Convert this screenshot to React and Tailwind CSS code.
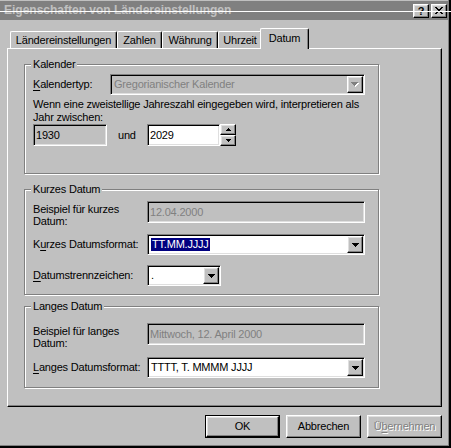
import React from "react";

const RAISED =
  "border border-t-white border-l-white border-r-black border-b-black shadow-[inset_-1px_-1px_#808080,inset_1px_1px_#dfdfdf]";
const SUNKEN =
  "border border-t-[#808080] border-l-[#808080] border-r-white border-b-white shadow-[inset_1px_1px_#000,inset_-1px_-1px_#dfdfdf]";
const ETCHED = "border border-[#808080] shadow-[inset_1px_1px_#fff,1px_1px_#fff]";

const Mn = ({ children }) => <span className="underline underline-offset-[2px]">{children}</span>;

const DownArrow = ({ disabled }) =>
  disabled ? (
    <svg width="8" height="5" viewBox="0 0 8 5">
      <path d="M1 1h7v1H1zM2 2h5v1H2zM3 3h3v1H3zM4 4h1v1H4z" fill="#fff" />
      <path d="M0 0h7v1H0zM1 1h5v1H1zM2 2h3v1H2zM3 3h1v1H3z" fill="#808080" />
    </svg>
  ) : (
    <svg width="7" height="4" viewBox="0 0 7 4">
      <path d="M0 0h7v1H0zM1 1h5v1H1zM2 2h3v1H2zM3 3h1v1H3z" fill="#000" />
    </svg>
  );

const SmallArrow = ({ up }) => (
  <svg width="5" height="3" viewBox="0 0 5 3">
    <path
      d={up ? "M2 0h1v1H2zM1 1h3v1H1zM0 2h5v1H0z" : "M0 0h5v1H0zM1 1h3v1H1zM2 2h1v1H2z"}
      fill="#000"
    />
  </svg>
);

const ArrowButton = ({ disabled }) => (
  <div className={`w-[16px] h-[17px] shrink-0 bg-[#c0c0c0] flex items-center justify-center ${RAISED}`}>
    <DownArrow disabled={disabled} />
  </div>
);

const Combo = ({ className, text, disabled, selected }) => (
  <div
    className={`h-[21px] flex items-center p-px ${SUNKEN} ${disabled ? "bg-[#c0c0c0]" : "bg-white"} ${className}`}
  >
    <div className={`flex-1 pl-[2px] whitespace-nowrap overflow-hidden ${disabled ? "text-[#808080]" : ""}`}>
      {selected ? <span className="bg-[#000080] text-white px-px py-px">{text}</span> : text}
    </div>
    <ArrowButton disabled={disabled} />
  </div>
);

const Edit = ({ className, text, gray, white }) => (
  <div
    className={`h-[22px] flex items-center pl-[2px] whitespace-nowrap ${SUNKEN} ${white ? "bg-white" : "bg-[#c0c0c0]"} ${
      gray ? "text-[#808080]" : ""
    } ${className}`}
  >
    {text}
  </div>
);

const Group = ({ title, className, children }) => (
  <div className={`relative w-[355px] shrink-0 ${ETCHED} ${className}`}>
    <span className="absolute -top-[7px] left-[6px] px-[2px] bg-[#c0c0c0] leading-[13px]">{title}</span>
    {children}
  </div>
);

const Tab = ({ w, children }) => (
  <div
    className={`${w} h-[17px] shrink-0 rounded-t-[2px] border-t border-l border-white border-r border-r-black shadow-[inset_-1px_0_#808080] flex items-center justify-center whitespace-nowrap`}
  >
    {children}
  </div>
);

const Button = ({ children, def, disabled }) => (
  <div className={`w-[75px] h-[23px] ${def ? "border border-black" : ""}`}>
    <div
      className={`w-full h-full bg-[#c0c0c0] flex items-center justify-center ${RAISED} ${
        disabled ? "text-[#808080] [text-shadow:1px_1px_#fff]" : ""
      }`}
    >
      {children}
    </div>
  </div>
);

const CaptionBtn = ({ children, className = "" }) => (
  <div className={`w-[16px] h-[14px] bg-[#c0c0c0] flex items-center justify-center ${RAISED} ${className}`}>
    {children}
  </div>
);

export default function App() {
  return (
    <div className="relative w-[451px] h-[448px] bg-[#c0c0c0] font-['Liberation_Sans',Arial,sans-serif] text-[11px] leading-[13px] tracking-[-0.2px] text-black overflow-hidden">
      <div className="flex flex-col w-full h-full border-r-2 border-b-2 border-black shadow-[inset_-1px_-1px_#808080]">
        {/* Title bar (inactive) */}
        <div className="mt-px h-[19px] bg-[#808080] flex items-center pl-[4px] pr-[2px]">
          <span className="flex-1 font-bold text-[12px] tracking-normal text-[#c0c0c0] whitespace-nowrap">
            Eigenschaften von Ländereinstellungen
          </span>
          <CaptionBtn>
            <span className="font-bold text-[11px] leading-none pt-px">?</span>
          </CaptionBtn>
          <CaptionBtn className="ml-[2px]">
            <svg width="8" height="7" viewBox="0 0 8 7">
              <path
                d="M0 0h2v1H0zM6 0h2v1H6zM1 1h2v1H1zM5 1h2v1H5zM2 2h4v1H2zM3 3h2v1H3zM2 4h4v1H2zM1 5h2v1H1zM5 5h2v1H5zM0 6h2v1H0zM6 6h2v1H6z"
                fill="#000"
              />
            </svg>
          </CaptionBtn>
        </div>

        {/* Tabs */}
        <div className="mt-[8px] h-[20px] flex items-end pl-[10px]">
          <Tab w="w-[107px]">Ländereinstellungen</Tab>
          <Tab w="w-[45px]">Zahlen</Tab>
          <Tab w="w-[56px]">Währung</Tab>
          <Tab w="w-[44px]">Uhrzeit</Tab>
          <div className="relative z-10 -ml-[2px] -mb-px w-[49px] h-[21px] shrink-0 bg-[#c0c0c0] rounded-t-[2px] border-t border-l border-white border-r border-r-black shadow-[inset_-1px_0_#808080] flex items-center justify-center pb-[2px]">
            Datum
          </div>
        </div>

        {/* Tab panel */}
        <div className="ml-[7px] w-[435px] h-[359px] shrink-0 border border-t-white border-l-white border-r-black border-b-black shadow-[inset_-1px_-1px_#808080] flex flex-col pl-[16px] pt-[15px]">
          <Group title="Kalender" className="h-[110px] flex flex-col pl-[8px] pt-[9px]">
            <div className="flex items-center h-[21px]">
              <span className="w-[77px] shrink-0">
                <Mn>K</Mn>alendertyp:
              </span>
              <Combo className="w-[255px]" text="Gregorianischer Kalender" disabled />
            </div>
            <p className="mt-[3px] whitespace-nowrap">
              Wenn eine zweistellige Jahreszahl eingegeben wird, interpretieren als
              <br />
              Jahr zwischen:
            </p>
            <div className="flex items-center">
              <Edit className="w-[74px]" text="1930" />
              <span className="ml-[11px] w-[29px] shrink-0">und</span>
              <Edit className="w-[73px]" text="2029" white />
              <div className="flex flex-col">
                <div className={`w-[16px] h-[11px] bg-[#c0c0c0] flex items-center justify-center ${RAISED}`}>
                  <SmallArrow up />
                </div>
                <div className={`w-[16px] h-[11px] bg-[#c0c0c0] flex items-center justify-center ${RAISED}`}>
                  <SmallArrow />
                </div>
              </div>
            </div>
          </Group>

          <Group title="Kurzes Datum" className="mt-[15px] h-[106px] flex flex-col pl-[8px] pt-[11px]">
            <div className="flex items-start">
              <span className="w-[114px] shrink-0 leading-[12px] pt-[2px]">
                Beispiel für kurzes
                <br />
                Datum:
              </span>
              <Edit className="w-[218px]" text="12.04.2000" gray />
            </div>
            <div className="mt-[7px] flex items-center h-[21px]">
              <span className="w-[114px] shrink-0">
                K<Mn>u</Mn>rzes Datumsformat:
              </span>
              <Combo className="w-[218px]" text="TT.MM.JJJJ" selected />
            </div>
            <div className="mt-[10px] flex items-center h-[21px]">
              <span className="w-[114px] shrink-0">
                <Mn>D</Mn>atumstrennzeichen:
              </span>
              <Combo className="w-[74px]" text="." />
            </div>
          </Group>

          <Group title="Langes Datum" className="mt-[11px] h-[82px] flex flex-col pl-[8px] pt-[16px]">
            <div className="flex items-start">
              <span className="w-[114px] shrink-0 leading-[12px] pt-[2px]">
                Beispiel für langes
                <br />
                Datum:
              </span>
              <Edit className="w-[218px]" text="Mittwoch, 12. April 2000" gray />
            </div>
            <div className="mt-[8px] flex items-center h-[21px]">
              <span className="w-[114px] shrink-0">
                <Mn>L</Mn>anges Datumsformat:
              </span>
              <Combo className="w-[218px]" text="TTTT, T. MMMM JJJJ" />
            </div>
          </Group>
        </div>

        {/* Dialog buttons */}
        <div className="mt-[8px] flex justify-end gap-[6px] pr-[7px]">
          <Button def>OK</Button>
          <Button>Abbrechen</Button>
          <Button disabled>
            Ü<Mn>b</Mn>ernehmen
          </Button>
        </div>
      </div>

      {/* stray white scan line across the caption */}
      <div className="absolute left-0 top-[11px] w-full h-px bg-white" />
    </div>
  );
}
